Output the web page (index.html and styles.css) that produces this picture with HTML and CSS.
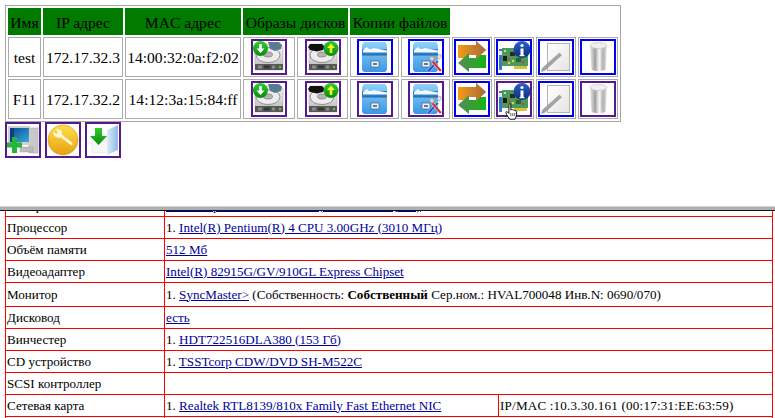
FILE: index.html
```html
<!DOCTYPE html>
<html lang="ru">
<head>
<meta charset="utf-8">
<title>Компьютеры</title>
<link rel="stylesheet" href="styles.css">
</head>
<body>
<svg class="defs" aria-hidden="true">
  <defs>
    <linearGradient id="gDisk" x1="0" y1="0" x2="0" y2="1"><stop offset="0" stop-color="#f6f6f6"/><stop offset="1" stop-color="#b8b8b8"/></linearGradient>
    <linearGradient id="gGreen" x1="0" y1="0" x2="0" y2="1"><stop offset="0" stop-color="#2fce2f"/><stop offset="1" stop-color="#0b8a0b"/></linearGradient>
    <linearGradient id="gBox" x1="0" y1="0" x2="0" y2="1"><stop offset="0" stop-color="#8ed2f6"/><stop offset="1" stop-color="#3a97e6"/></linearGradient>
    <linearGradient id="gOrange" gradientUnits="userSpaceOnUse" x1="2" y1="0" x2="30" y2="0"><stop offset="0" stop-color="#f59a14"/><stop offset="1" stop-color="#a56a3c"/></linearGradient>
    <linearGradient id="gArrow" x1="1" y1="0" x2="0" y2="0"><stop offset="0" stop-color="#12b412"/><stop offset="1" stop-color="#5a8a5a"/></linearGradient>
    <linearGradient id="gPaper" x1="0" y1="0" x2="1" y2="1"><stop offset="0" stop-color="#ffffff"/><stop offset="1" stop-color="#e4e4e4"/></linearGradient>
    <linearGradient id="gCan" x1="0" y1="0" x2="1" y2="0"><stop offset="0" stop-color="#e6e6e6"/><stop offset=".3" stop-color="#a6a6a6"/><stop offset=".55" stop-color="#f6f6f6"/><stop offset=".8" stop-color="#b4b4b4"/><stop offset="1" stop-color="#e8e8e8"/></linearGradient>
    <linearGradient id="gGold" x1="0" y1="0" x2="0" y2="1"><stop offset="0" stop-color="#ffe04a"/><stop offset="1" stop-color="#e6a010"/></linearGradient>
    <linearGradient id="gInfo" x1="0" y1="0" x2="0" y2="1"><stop offset="0" stop-color="#2d62c8"/><stop offset="1" stop-color="#0a2a78"/></linearGradient>
    <linearGradient id="gFold" x1="0" y1="0" x2="1" y2="0"><stop offset="0" stop-color="#dcebf8"/><stop offset="1" stop-color="#8fb8e2"/></linearGradient>
    <linearGradient id="gScreen" x1="0" y1="0" x2="1" y2="1"><stop offset="0" stop-color="#0a4c90"/><stop offset="1" stop-color="#38a8dc"/></linearGradient>

    <symbol id="hddBase" viewBox="0 0 32 32">
      <path d="M4 3h24l2 3v23H2V6z" fill="url(#gDisk)" stroke="#a0a0a0" stroke-width=".5"/>
      <ellipse cx="15" cy="14" rx="12" ry="7.500" fill="#ededed" stroke="#6e6e6e" stroke-width=".7"/>
      <ellipse cx="15" cy="13.500" rx="4.500" ry="2.500" fill="#b4b4b4" stroke="#666" stroke-width=".6"/>
      <rect x="2" y="23" width="28" height="6" fill="#585858"/>
      <rect x="5" y="24.500" width="4" height="3" fill="#8a8a8a"/>
      <rect x="11" y="24.500" width="6" height="3" fill="#383838"/>
      <rect x="19" y="24.500" width="3" height="3" fill="#8a8a8a"/>
      <rect x="26" y="25" width="2" height="2" fill="#66c14a"/>
    </symbol>
    <symbol id="hddDown" viewBox="0 0 32 32">
      <use href="#hddBase"/>
      <path d="M15 1h11l3 3-1 4-6 2-5-2z" fill="#5a7c92"/>
      <circle cx="7.500" cy="7.500" r="7.500" fill="url(#gGreen)"/>
      <path d="M6.200 3h2.600v4.500h2.700L7.500 12 3.500 7.500h2.700z" fill="#fff"/>
    </symbol>
    <symbol id="hddUp" viewBox="0 0 32 32">
      <use href="#hddBase"/>
      <path d="M3 3h12l3 3-2 3-6 1.500L3 9 1 6z" fill="#111"/>
      <circle cx="24" cy="7.500" r="7.500" fill="url(#gGreen)"/>
      <path d="M24 2.500l4 4.500h-2.700v5h-2.600V7H20z" fill="#f6f61e"/>
    </symbol>

    <symbol id="box" viewBox="0 0 32 32">
      <path d="M5 1h21l2 3v25l-2 2H5l-2-2V4z" fill="url(#gBox)"/>
      <rect x="3" y="8" width="25" height="6" fill="#2f7fc8"/>
      <path d="M4 9l4-3 2 2h3l1-1 14 2.500v2L4 11.500z" fill="#f4fbff"/>
      <rect x="3" y="13.500" width="25" height="1" fill="#1f68b0"/>
      <rect x="12" y="20" width="8" height="6" fill="#eef2f6" stroke="#3c5f80" stroke-width=".7"/>
      <rect x="14" y="22" width="4" height="2" fill="#5a7d9e"/>
      <rect x="24" y="15.500" width="2" height="1.500" fill="#e09030"/>
    </symbol>
    <symbol id="boxTool" viewBox="0 0 32 32">
      <use href="#box"/>
      <path d="M17 29.500L27 19l1.800 1.600L19 31.500z" fill="#2a50c8" stroke="#fff" stroke-width=".5"/>
      <path d="M30 31l-8.500-10 1.800-1.800 8.500 10z" fill="#d42a2a" stroke="#fff" stroke-width=".5"/>
      <path d="M19 17l3-2 2.500 2-1 2.500-2.500.5z" fill="#d4d4d4" stroke="#777" stroke-width=".4"/>
      <path d="M27 16l2-3 2 .5.500 2-2 3z" fill="#e4e4e4" stroke="#777" stroke-width=".4"/>
    </symbol>

    <symbol id="swap" viewBox="0 0 32 32">
      <path d="M2 17V4h18V0l10 9-10 9v-4h-8v3z" fill="url(#gOrange)"/>
      <path d="M30 14v13H13v4L2 22l11-10v5h7v-3z" fill="url(#gArrow)"/>
      <path d="M15 4h5V0l10 9-10 9v-4h-5z" fill="url(#gOrange)"/>
    </symbol>

    <symbol id="card" viewBox="0 0 32 32">
      <rect x="1" y="8" width="3" height="21" fill="#3a78c8"/>
      <rect x="1" y="10" width="3" height="4" fill="#e8e8e8"/>
      <rect x="4" y="7" width="26" height="18" fill="#4a9a5c"/>
      <rect x="16" y="25" width="13" height="3" fill="#d8c040"/>
      <rect x="5" y="15" width="4" height="5" fill="#1a1a1a"/>
      <rect x="12" y="11" width="5" height="4" fill="#2a2a2a"/>
      <rect x="18" y="17" width="5" height="4" fill="#2f5f3a"/>
      <circle cx="11" cy="18" r="1.200" fill="#d04040"/>
      <circle cx="15" cy="20" r="1.200" fill="#e8d040"/>
      <circle cx="11" cy="22" r="1.200" fill="#e8d040"/>
      <circle cx="25" cy="21" r="1.200" fill="#d04040"/>
      <circle cx="7" cy="10" r="1" fill="#e8e8e8"/>
      <circle cx="24" cy="8.500" r="8.500" fill="url(#gInfo)"/>
      <circle cx="24" cy="4.500" r="1.600" fill="#fff"/>
      <path d="M22.500 7.500h3v6.500h1v1.300h-5V14h1z" fill="#fff"/>
    </symbol>

    <symbol id="page" viewBox="0 0 32 32">
      <rect x="7.500" y="2.500" width="22" height="27" fill="url(#gPaper)" stroke="#b4b4b4"/>
      <path d="M1.500 30.500l1-3.500L19.500 12l2 2.200L4.800 29.500z" fill="#a4a4a4" stroke="#7c7c7c" stroke-width=".4"/>
    </symbol>

    <symbol id="can" viewBox="0 0 32 32">
      <path d="M8 5l1.500 24q7 2.500 14 0L25 5z" fill="url(#gCan)"/>
      <ellipse cx="16.500" cy="4.500" rx="8.500" ry="3" fill="#efefef" stroke="#c0c0c0" stroke-width=".7"/>
      <path d="M13 9v19M20 9v19" stroke="#777" stroke-width=".6" opacity=".45"/>
    </symbol>

    <symbol id="pc" viewBox="0 0 32 32">
      <rect x="22" y="4" width="9" height="25" fill="#c8c8c8" stroke="#a0a0a0" stroke-width=".5"/>
      <rect x="1" y="2" width="22" height="19" fill="#cfcfcf"/>
      <rect x="3" y="4" width="19" height="14" fill="url(#gScreen)"/>
      <rect x="3" y="4" width="4" height="14" fill="#0f3f80"/>
      <rect x="13" y="23" width="13" height="5" fill="#bdbdbd" stroke="#999" stroke-width=".4"/>
      <path d="M5 13h5v5.500h5v5h-5V29H5v-5.500H0v-5h5z" fill="#25b53c"/>
    </symbol>

    <symbol id="tool" viewBox="0 0 32 32">
      <circle cx="16" cy="16" r="15" fill="url(#gGold)" stroke="#d09a18" stroke-width=".6"/>
      <path d="M6 7.500l4 2.500.5-2.500-2-2q4-1 6 1.500l.5 3.500 10 8q1.500 2-.5 3l-10.500-8q-4 1-6.500-1.500-1.500-1.500-1.500-4.500z" fill="#fff5d8"/>
    </symbol>

    <symbol id="fold" viewBox="0 0 32 32">
      <path d="M5 11h16v18H5z" fill="#f6f6f6" stroke="#e0e0e0" stroke-width=".5"/>
      <path d="M20 6l11-5v25l-11 5z" fill="url(#gFold)"/>
      <path d="M8 4h7v8h5l-8.500 9L3 12h5z" fill="url(#gGreen)"/>
    </symbol>
  </defs>
</svg>

<div class="top-frame">
  <table class="hosts">
    <colgroup>
      <col class="c-name"><col class="c-ip"><col class="c-mac">
      <col class="c-d1"><col class="c-d2"><col class="c-f"><col class="c-f">
      <col class="c-i"><col class="c-i"><col class="c-i"><col class="c-i">
    </colgroup>
    <tr>
      <th>Имя</th><th>IP адрес</th><th>MAC адрес</th>
      <th colspan="2">Образы дисков</th><th colspan="2">Копии файлов</th>
      <td class="blank" colspan="4"></td>
    </tr>
    <tr>
      <td class="txt">test</td><td class="txt">172.17.32.3</td><td class="txt">14:00:32:0a:f2:02</td>
      <td><a class="ico seen"><svg><use href="#hddDown"/></svg></a></td>
      <td><a class="ico seen"><svg><use href="#hddUp"/></svg></a></td>
      <td><a class="ico"><svg><use href="#box"/></svg></a></td>
      <td><a class="ico"><svg><use href="#boxTool"/></svg></a></td>
      <td><a class="ico"><svg><use href="#swap"/></svg></a></td>
      <td><a class="ico"><svg><use href="#card"/></svg></a></td>
      <td><a class="ico"><svg><use href="#page"/></svg></a></td>
      <td><a class="ico"><svg><use href="#can"/></svg></a></td>
    </tr>
    <tr>
      <td class="txt">F11</td><td class="txt">172.17.32.2</td><td class="txt">14:12:3a:15:84:ff</td>
      <td><a class="ico seen"><svg><use href="#hddDown"/></svg></a></td>
      <td><a class="ico seen"><svg><use href="#hddUp"/></svg></a></td>
      <td><a class="ico seen"><svg><use href="#box"/></svg></a></td>
      <td><a class="ico seen"><svg><use href="#boxTool"/></svg></a></td>
      <td><a class="ico"><svg><use href="#swap"/></svg></a></td>
      <td><a class="ico seen hovered"><svg><use href="#card"/></svg>
        <svg class="cursor" viewBox="0 0 18 22"><path d="M5 1.500q1.500-1 2.500 0V9l1-.5q1-.5 1.500.5 1-.5 1.500.5 1-.5 1.500.5 1.500-.5 2 1V16l-2 5H6l-4-6-1-3q1-1.500 2-.5l2 2z" fill="#fff" stroke="#000" stroke-width="1.200"/><path d="M7.500 13v4M10 13v4M12.500 13v4" stroke="#000" stroke-width=".8"/></svg></a></td>
      <td><a class="ico"><svg><use href="#page"/></svg></a></td>
      <td><a class="ico seen"><svg><use href="#can"/></svg></a></td>
    </tr>
  </table>
  <div class="actions">
    <a class="ico seen"><svg><use href="#pc"/></svg></a>
    <a class="ico seen"><svg><use href="#tool"/></svg></a>
    <a class="ico seen"><svg><use href="#fold"/></svg></a>
  </div>
</div>

<div class="splitter"></div>

<div class="bottom-frame">
  <table class="specs">
    <colgroup><col class="s-label"><col class="s-main"><col class="s-extra"></colgroup>
    <tr><td>Материнская плата</td><td colspan="2"><a href="#">Intel Corporation D915GAV (BTAV45100QM6)</a></td></tr>
    <tr><td>Процессор</td><td colspan="2">1. <a href="#">Intel(R) Pentium(R) 4 CPU 3.00GHz (3010 МГц)</a></td></tr>
    <tr><td>Объём памяти</td><td colspan="2"><a href="#">512 Мб</a></td></tr>
    <tr><td>Видеоадаптер</td><td colspan="2"><a href="#">Intel(R) 82915G/GV/910GL Express Chipset</a></td></tr>
    <tr class="tall"><td>Монитор</td><td colspan="2">1. <a href="#">SyncMaster&gt;</a> (Собственность: <b>Собственный</b> Сер.ном.: HVAL700048 Инв.N: 0690/070)</td></tr>
    <tr><td>Дисковод</td><td colspan="2"><a href="#">есть</a></td></tr>
    <tr><td>Винчестер</td><td colspan="2">1. <a href="#">HDT722516DLA380 (153 Гб)</a></td></tr>
    <tr><td>CD устройство</td><td colspan="2">1. <a href="#">TSSTcorp CDW/DVD SH-M522C</a></td></tr>
    <tr><td>SCSI контроллер</td><td colspan="2"></td></tr>
    <tr><td>Сетевая карта</td><td>1. <a href="#">Realtek RTL8139/810x Family Fast Ethernet NIC</a></td><td class="wide">IP/MAC :10.3.30.161 (00:17:31:EE:63:59)</td></tr>
    <tr><td>&nbsp;</td><td colspan="2"></td></tr>
  </table>
</div>
</body>
</html>
```
FILE: styles.css
```css
html, body { margin: 0; height: 100%; overflow: hidden; background: #fff; }
body { display: flex; flex-direction: column; height: 418px; font-family: "Liberation Serif", serif; color: #000; }
.defs { display: block; width: 0; height: 0; flex: none; }

.top-frame { flex: none; height: 206px; box-sizing: border-box; padding: 5px; }

.hosts { table-layout: fixed; width: 616px; border-collapse: separate; border-spacing: 2px; border: 1px solid #a6a6a6; font-size: 15.6px; }
.hosts th, .hosts td { border: 1px solid #ababab; padding: 1px; text-align: center; white-space: nowrap; overflow: hidden; }
.hosts th { background: #007b00; font-weight: normal; height: 27px; box-sizing: border-box; padding: 2px 0 0; border-color: #007b00; }
.hosts td.txt { padding: 3px 1px 1px; }
.hosts td.blank { border: 0; background: transparent; }
.c-name { width: 33px; } .c-ip { width: 80px; } .c-mac { width: 116px; }
.c-d1 { width: 52px; } .c-d2 { width: 51px; } .c-f { width: 49px; } .c-i { width: 40px; }

.ico { display: block; position: relative; box-sizing: border-box; width: 36px; height: 36px; margin: 0 auto; border: 2px solid #0000ee; }
.ico.seen { border-color: #551a8b; }
.ico svg { display: block; width: 32px; height: 32px; }
.ico svg.cursor { position: absolute; left: 7px; top: 20px; width: 14px; height: 17px; }
.hosts td:has(.hovered) { overflow: visible; }

.actions { display: flex; gap: 4px; }
.actions .ico { margin: 0; }

.splitter { flex: none; height: 5px; background: linear-gradient(#d4d4d4 0, #d4d4d4 1px, #b0b0b0 1px, #b0b0b0 4px, #111 4px, #111 5px); }

.bottom-frame { flex: 1; min-height: 0; overflow: hidden; }
.specs { table-layout: fixed; width: 767px; margin: -17px 0 0 5px; border-collapse: collapse; font-size: 13.1px; }
.specs td { border: 1px solid #f00; height: 22px; padding: 0 1px; box-sizing: border-box; white-space: nowrap; }
.specs tr.tall td { height: 24px; }
.specs td.wide { letter-spacing: .2px; }
.s-label { width: 159px; } .s-main { width: 334px; } .s-extra { width: 274px; }
.specs a { color: #00009a; }
```
